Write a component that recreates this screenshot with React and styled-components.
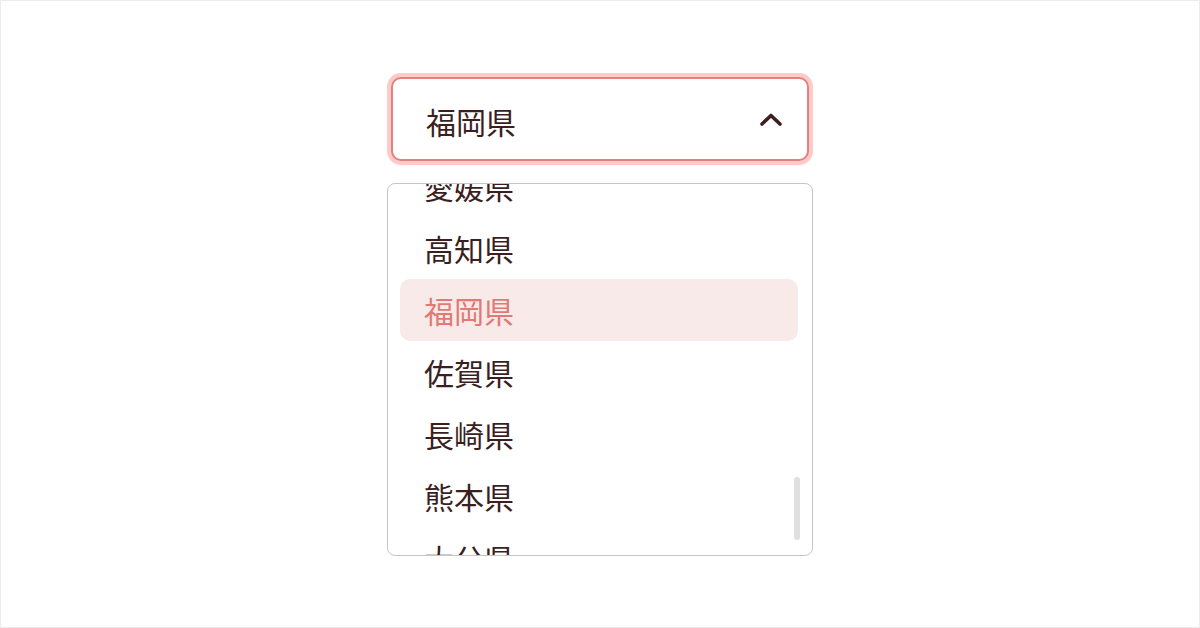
import React, { useLayoutEffect, useRef } from 'react';
import styled, { createGlobalStyle } from 'styled-components';

const prefectures = [
  '北海道', '青森県', '岩手県', '宮城県', '秋田県', '山形県', '福島県',
  '茨城県', '栃木県', '群馬県', '埼玉県', '千葉県', '東京都', '神奈川県',
  '新潟県', '富山県', '石川県', '福井県', '山梨県', '長野県', '岐阜県',
  '静岡県', '愛知県', '三重県', '滋賀県', '京都府', '大阪府', '兵庫県',
  '奈良県', '和歌山県', '鳥取県', '島根県', '岡山県', '広島県', '山口県',
  '徳島県', '香川県', '愛媛県', '高知県', '福岡県', '佐賀県', '長崎県',
  '熊本県', '大分県', '宮崎県', '鹿児島県', '沖縄県',
];

const colours = {
  text: '#3b1f1f',
  accent: '#df7b74',
  accentBorder: '#de837e',
  ring: '#ffcac8',
  selectedBg: '#f9eaea',
  listBorder: '#c6c6c6',
  thumb: '#e0e0e0',
  frame: '#ececec',
};

const ITEM_HEIGHT = 62;
const LIST_PADDING = 12;
const SELECTED = '福岡県';

const GlobalStyle = createGlobalStyle`
  html, body {
    margin: 0;
    padding: 0;
    background: #fff;
  }
  body {
    font-family: "Noto Sans CJK JP", "Noto Sans", sans-serif;
    color: ${ colours.text };
  }
  * { box-sizing: border-box; }
`;

const Page = styled.div`
  width: 1200px;
  height: 628px;
  border: 1px solid ${ colours.frame };
  display: flex;
  justify-content: center;
  padding-top: 76px;
`;

const Select = styled.div`
  width: 426px;
  display: flex;
  flex-direction: column;
`;

const Trigger = styled.button`
  margin: 0 4px;
  height: 84px;
  border: 2px solid ${ colours.accentBorder };
  border-radius: 10px;
  box-shadow: 0 0 0 4px ${ colours.ring };
  background: #fff;
  display: flex;
  align-items: center;
  justify-content: space-between;
  padding: 0 24px 0 33px;
  font-family: inherit;
  font-size: 30px;
  color: ${ colours.text };
  cursor: pointer;
`;

const TriggerLabel = styled.span`
  line-height: 1;
  padding-top: 4px;
`;

const Chevron = styled.svg`
  width: 24px;
  height: 24px;
  display: block;
`;

const ListBox = styled.div`
  margin-top: 22px;
  height: 373px;
  border: 1.5px solid ${ colours.listBorder };
  border-radius: 8px;
  position: relative;
  overflow: hidden;
`;

const Scroller = styled.ul`
  list-style: none;
  margin: 0;
  height: 100%;
  overflow: hidden;
  padding: ${ LIST_PADDING }px 14px ${ LIST_PADDING }px 12px;
`;

const Option = styled.li`
  height: ${ ITEM_HEIGHT }px;
  line-height: ${ ITEM_HEIGHT }px;
  padding-left: 24px;
  border-radius: 10px;
  font-size: 30px;
  color: ${ p => p.$selected ? colours.accent : colours.text };
  background: ${ p => p.$selected ? colours.selectedBg : 'transparent' };
`;

const Thumb = styled.div`
  position: absolute;
  right: 12px;
  top: 293px;
  width: 6px;
  height: 63px;
  border-radius: 3px;
  background: ${ colours.thumb };
`;

export default function App() {
  const listRef = useRef(null);

  useLayoutEffect(() => {
    const index = prefectures.indexOf(SELECTED);
    if (listRef.current) {
      listRef.current.scrollTop = LIST_PADDING + index * ITEM_HEIGHT - 95;
    }
  }, []);

  return (
    <>
      <GlobalStyle />
      <Page>
        <Select>
          <Trigger>
            <TriggerLabel>{ SELECTED }</TriggerLabel>
            <Chevron viewBox="0 0 24 24" fill="none">
              <path d="M3 17 L12 8.5 L21 17" stroke={ colours.text } strokeWidth="3.6" strokeLinecap="round" strokeLinejoin="round" />
            </Chevron>
          </Trigger>
          <ListBox>
            <Scroller ref={ listRef }>
              { prefectures.map(name => (
                <Option key={ name } $selected={ name === SELECTED }>{ name }</Option>
              )) }
            </Scroller>
            <Thumb />
          </ListBox>
        </Select>
      </Page>
    </>
  );
}
